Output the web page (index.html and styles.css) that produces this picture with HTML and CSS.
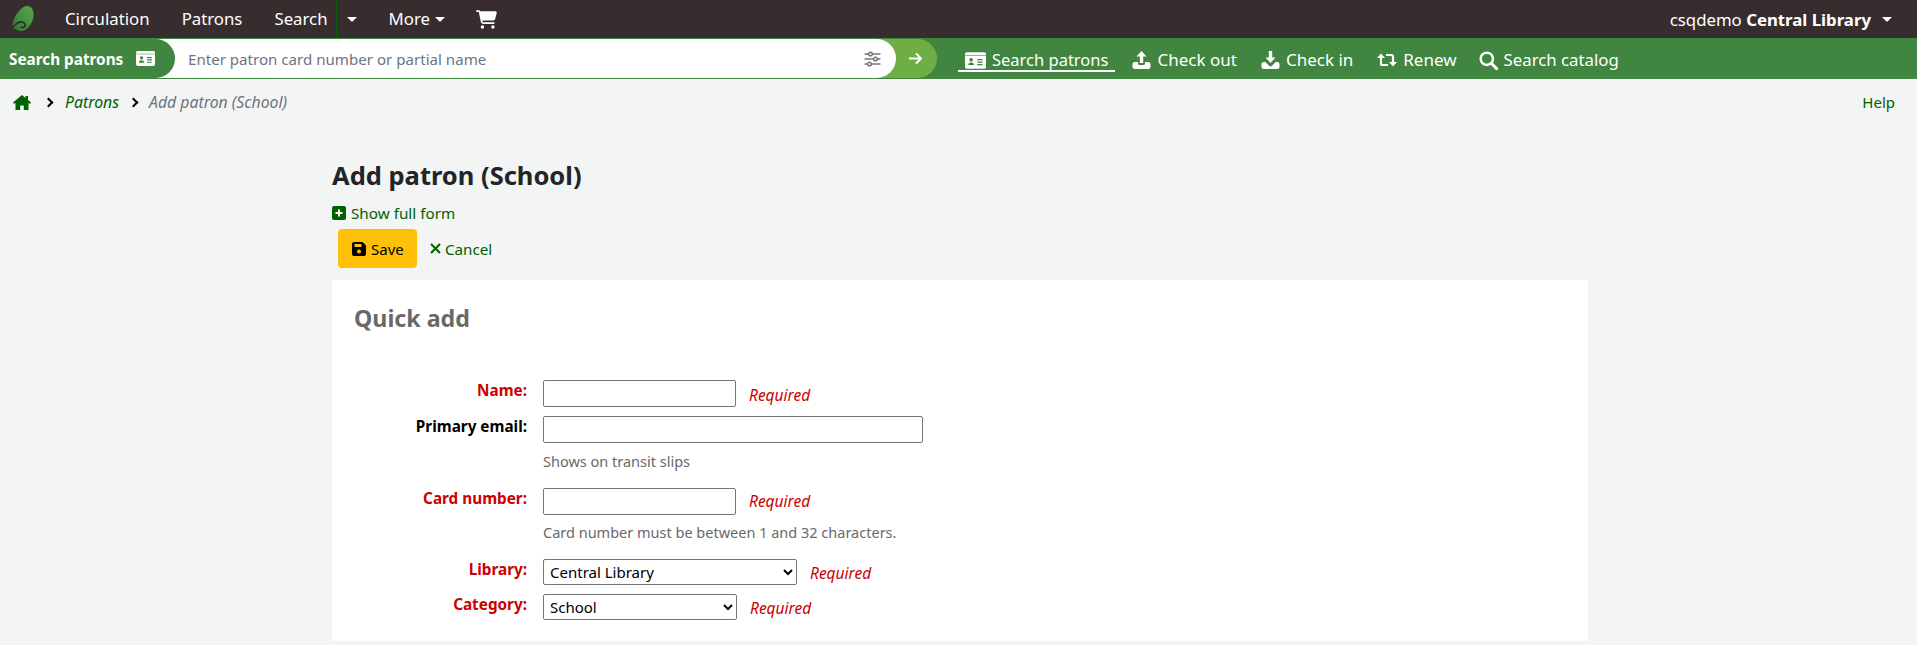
FILE: index.html
```html
<!DOCTYPE html>
<html lang="en">
<head>
<meta charset="utf-8">
<title>Add patron (School)</title>
<link rel="stylesheet" href="styles.css">
</head>
<body>
<nav class="topnav">
  <a class="logo" href="#"><svg width="22" height="26" viewBox="0 0 22 26"><defs><linearGradient id="leaf" x1="1" y1="0" x2="0" y2="1"><stop offset="0" stop-color="#5da64c"/><stop offset="1" stop-color="#2f7a37"/></linearGradient></defs><path fill="url(#leaf)" d="M15 0c5 0 7 5 6.500 10C20.500 18 15 25 9 25c-2 0-4-1-5-2l-3 0C0 16 3 9 7 5c2.500-3 5-5 8-5z"/><path fill="none" stroke="#372d2f" stroke-width="1.800" d="M.5 23c2-6 9-9 12-5.500 2 2.500-1 5-4 3.500"/></svg></a>
  <a class="navlink" href="#">Circulation</a>
  <a class="navlink" href="#">Patrons</a>
  <a class="navlink search" href="#">Search</a>
  <span class="splitcaret"><i class="caret"></i></span>
  <a class="navlink more" href="#">More<i class="caret"></i></a>
  <a class="cart" href="#"><svg width="21" height="19" viewBox="0 0 576 512"><path fill="#fff" d="M0 24C0 11 11 0 24 0h45c22 0 41 13 50 32h411c26 0 45 25 38 50l-41 152c-8 28-33 48-62 48H173l5 29c2 11 12 19 24 19h288c13 0 24 11 24 24s-11 24-24 24H202c-35 0-65-25-71-59L79 52c-1-4-4-4-8-4H24C11 48 0 37 0 24zM128 464a48 48 0 1 1 96 0 48 48 0 1 1-96 0zm336-48a48 48 0 1 1 0 96 48 48 0 1 1 0-96z"/></svg></a>
  <a class="user" href="#"><span>csqdemo <b>Central Library</b></span><i class="caret"></i></a>
</nav>

<div class="searchbar">
  <div class="scope">Search patrons<svg width="19" height="15" viewBox="0 0 576 448"><path fill="#fff" d="M48 0h480c26 0 48 22 48 48v352c0 26-22 48-48 48H48c-26 0-48-22-48-48V48C0 22 22 0 48 0z"/><path fill="#408540" d="M0 80h576v16H0z"/><circle fill="#408540" cx="168" cy="205" r="50"/><path fill="#408540" d="M88 350c0-44 36-70 80-70s80 26 80 70zM336 180h144v36H336zM336 250h144v36H336zM336 320h144v36H336z"/></svg></div>
  <div class="inputwrap">
    <span class="placeholder">Enter patron card number or partial name</span>
    <svg width="17" height="16" viewBox="0 0 16 16"><g stroke="#777" stroke-width="1.500" fill="#fff"><path d="M0 3h16M0 8h16M0 13h16"/><circle cx="6" cy="3" r="1.800"/><circle cx="11" cy="8" r="1.800"/><circle cx="5" cy="13" r="1.800"/></g></svg>
  </div>
  <div class="go"><svg width="15" height="13" viewBox="0 0 15 13"><path d="M1 6.500h12M8 1.500l5 5-5 5" fill="none" stroke="#fff" stroke-width="2"/></svg></div>
  <div class="tabs">
    <a class="tab active" href="#"><svg width="21" height="17" viewBox="0 0 576 448"><path fill="#fff" d="M48 0h480c26 0 48 22 48 48v352c0 26-22 48-48 48H48c-26 0-48-22-48-48V48C0 22 22 0 48 0z"/><path fill="#408540" d="M0 80h576v16H0z"/><circle fill="#408540" cx="168" cy="205" r="50"/><path fill="#408540" d="M88 350c0-44 36-70 80-70s80 26 80 70zM336 180h144v36H336zM336 250h144v36H336zM336 320h144v36H336z"/></svg>Search patrons</a>
    <a class="tab" href="#"><svg width="19" height="18" viewBox="0 0 18 18"><path fill="#fff" d="M9 0l5 5.500h-3.300V12H7.300V5.500H4z"/><path fill="#fff" d="M2 11h3.500v1.500c0 1 .8 1.500 1.700 1.500h3.600c.9 0 1.700-.5 1.700-1.500V11H16c1 0 2 1 2 2v3c0 1-1 2-2 2H2c-1 0-2-1-2-2v-3c0-1 1-2 2-2z"/></svg>Check out</a>
    <a class="tab" href="#"><svg width="19" height="18" viewBox="0 0 18 18"><path fill="#fff" d="M7.300 0h3.400v6.500H14L9 12 4 6.500h3.300z"/><path fill="#fff" d="M2 11h1.800l3.800 3.800c.8.700 2 .7 2.800 0l3.800-3.800H16c1 0 2 1 2 2v3c0 1-1 2-2 2H2c-1 0-2-1-2-2v-3c0-1 1-2 2-2z"/></svg>Check in</a>
    <a class="tab" href="#"><svg width="20" height="14" viewBox="0 0 20 14"><path fill="#fff" d="M4 .5L8 5H0z M16 13.500L12 9h8z"/><path d="M4 4v6.500a1.500 1.500 0 0 0 1.500 1.500H11M16 10V3.500A1.500 1.500 0 0 0 14.500 2H9" fill="none" stroke="#fff" stroke-width="2.200"/></svg>Renew</a>
    <a class="tab" href="#"><svg width="19" height="19" viewBox="0 0 17 17"><circle cx="7" cy="7" r="5.500" fill="none" stroke="#fff" stroke-width="2.200"/><path d="M11 11l5 5" stroke="#fff" stroke-width="2.600" stroke-linecap="round"/></svg>Search catalog</a>
  </div>
</div>

<div class="crumbs">
  <a href="#"><svg width="18" height="15" viewBox="0 0 18 15"><path fill="#006100" d="M9 0L0 7.500 1 9l1.500-1.200V15h4.700v-4.500h3.600V15h4.700V7.800L17 9l1-1.500-3-2.500V1h-2.500v1.900z"/></svg></a>
  <i class="chev"></i>
  <a class="crumb" href="#">Patrons</a>
  <i class="chev"></i>
  <span class="crumb current">Add patron (School)</span>
  <a class="help" href="#">Help</a>
</div>

<main class="main">
  <h1>Add patron (School)</h1>
  <a class="showfull" href="#"><svg width="14" height="14" viewBox="0 0 14 14"><rect width="14" height="14" rx="2" fill="#006100"/><path d="M7 3.500v7M3.500 7h7" stroke="#fff" stroke-width="2"/></svg>Show full form</a>
  <div class="toolbar">
    <button class="save" type="button"><svg width="14" height="14" viewBox="0 0 14 14"><path fill="#000" d="M2 0h8.500L14 3.500V12a2 2 0 0 1-2 2H2a2 2 0 0 1-2-2V2a2 2 0 0 1 2-2z"/><rect x="2.500" y="2" width="7" height="3" rx=".5" fill="#ffc107"/><circle cx="7" cy="9.500" r="2" fill="#ffc107"/></svg>Save</button>
    <a class="cancel" href="#"><svg width="11" height="11" viewBox="0 0 11 11"><path d="M1 1l9 9M10 1l-9 9" stroke="#006100" stroke-width="2"/></svg>Cancel</a>
  </div>
  <section class="panel">
    <h2>Quick add</h2>
    <form class="form">
      <div class="row r1">
        <label class="req">Name:</label>
        <span class="box short"></span><em class="required">Required</em>
      </div>
      <div class="row r2">
        <label>Primary email:</label>
        <div><span class="box long"></span><div class="hint">Shows on transit slips</div></div>
      </div>
      <div class="row r3">
        <label class="req">Card number:</label>
        <div>
          <div class="inline"><span class="box short"></span><em class="required">Required</em></div>
          <div class="hint">Card number must be between 1 and 32 characters.</div>
        </div>
      </div>
      <div class="row r4">
        <label class="req">Library:</label>
        <select class="sel lib"><option>Central Library</option></select><em class="required">Required</em>
      </div>
      <div class="row r5">
        <label class="req">Category:</label>
        <select class="sel cat"><option>School</option></select><em class="required">Required</em>
      </div>
    </form>
  </section>
</main>
</body>
</html>
```
FILE: styles.css
```css
* { box-sizing: border-box; }
html, body { margin: 0; padding: 0; height: 645px; overflow: hidden; }
body { background: #f3f4f4; font-family: "Noto Sans", sans-serif; font-size: 15px; color: #000; }
a { text-decoration: none; color: #006100; }
svg { display: block; flex: none; }

.topnav { display: flex; align-items: center; height: 38px; background: #372d2f; color: #fff; }
.topnav a { color: #fff; }
.logo { margin-left: 12px; width: 53px; }
.navlink { font-size: 16.800px; line-height: 38px; }
.navlink + .navlink { margin-left: 32px; }
.navlink.search { padding-right: 8px; border-right: 1px solid #006100; height: 38px; }
.splitcaret { width: 26px; padding-left: 10px; display: flex; }
.caret { display: inline-block; width: 0; height: 0; border-top: 5px solid #fff; border-left: 5px solid transparent; border-right: 5px solid transparent; }
.navlink.more { margin-left: 26px; display: flex; align-items: center; gap: 5px; }
.cart { margin-left: 31px; }
.user { margin-left: auto; margin-right: 25px; font-size: 16.800px; display: flex; align-items: center; }
.user .caret { margin-left: 11px; }
.user b { font-weight: 700; }

.searchbar { display: flex; align-items: center; height: 41px; background: #408540; color: #fff; }
.scope { display: flex; align-items: center; gap: 13px; height: 39px; width: 175px; padding-left: 9px; font-weight: 700; font-size: 15.300px; background: #408540; border-radius: 0 20px 20px 0; position: relative; z-index: 2; }
.inputwrap { display: flex; align-items: center; justify-content: space-between; height: 39px; width: 741px; margin-left: -20px; padding: 0 15px 0 33px; background: #fff; border-radius: 0 20px 20px 0; position: relative; z-index: 1; }
.placeholder { color: #6c757d; font-size: 15.100px; }
.go { width: 61px; height: 39px; margin-left: -20px; padding-left: 32px; background: #6fae45; border-radius: 0 20px 20px 0; display: flex; align-items: center; }
.tabs { display: flex; align-items: center; margin-left: 21px; }
.tab { display: flex; align-items: center; gap: 6px; color: #fff; font-size: 17px; line-height: 20px; height: 22px; margin-top: 5px; border-bottom: 2px solid transparent; }
.tab + .tab { margin-left: 24px; }
.tab.active + .tab { margin-left: 17px; }
.tab:last-child { margin-left: 22px; font-size: 16.800px; }
.tab.active { padding: 0 7px; border-bottom-color: #fff; font-size: 16.500px; }

.crumbs { display: flex; align-items: center; height: 46px; padding: 0 22px 0 13px; }
.crumb { font-style: italic; font-size: 15.800px; }
.crumb.current { color: #6c757d; }
.chev { width: 7px; height: 7px; border-top: 2.500px solid #000; border-right: 2.500px solid #000; transform: rotate(45deg); margin: 0 13px 0 14px; }
.chev:nth-of-type(2) { margin: 0 12px 0 11px; }
.help { margin-left: auto; }

.main { width: 1256px; margin-left: 332px; }
h1 { margin: 0; padding-top: 33px; font-size: 25.500px; line-height: 34px; font-weight: 700; color: #212529; }
.showfull { display: flex; align-items: center; gap: 5px; margin-top: 11px; height: 20px; font-size: 15.250px; }
.toolbar { display: flex; align-items: center; margin: 6px 0 0 6px; height: 39px; }
.save { display: flex; align-items: center; gap: 5px; width: 79px; height: 39px; padding: 0 0 0 14px; border: 0; border-radius: 4px; background: #ffc107; color: #000; font: 15px "Noto Sans", sans-serif; }
.cancel { display: flex; align-items: center; gap: 4px; margin-left: 13px; font-size: 15.200px; }

.panel { margin-top: 12px; height: 361px; background: #fff; border-radius: 3px; padding: 23px 22px 0; }
h2 { margin: 0; font-size: 23.200px; line-height: 30px; font-weight: 700; color: #696969; }
.form { margin-top: 47px; }
.row { display: flex; align-items: flex-start; }
.row label { flex: none; width: 173px; margin-right: 16px; text-align: right; font-weight: 700; font-size: 15.300px; line-height: 20px; }
.req { color: #c00; }
.box { display: block; height: 27px; background: #fff; border: 1px solid #767676; border-radius: 2px; flex: none; }
.box.short { width: 193px; }
.box.long { width: 380px; }
.required { color: #c00; font-size: 15.500px; margin-left: 13px; line-height: 20px; }
.inline { display: flex; align-items: flex-start; }
.hint { color: #696969; font-size: 14.500px; line-height: 20px; }
.sel { height: 26px; background: #fff; color: #000; border: 1px solid #767676; border-radius: 2px; font: 15px "Noto Sans", sans-serif; padding: 0 0 0 2px; flex: none; }
.lib { width: 254px; }
.cat { width: 194px; }
.r1 { height: 36px; }
.r1 .required { margin-top: 5px; }
.r2 { height: 72px; }
.r2 .hint { margin-top: 8px; }
.r3 { height: 71px; }
.r3 .required { margin-top: 3px; }
.r3 .hint { margin-top: 7px; }
.r4 { height: 35px; }
.r4 .required { margin-top: 4px; }
.r5 .required { margin-top: 4px; }
```
